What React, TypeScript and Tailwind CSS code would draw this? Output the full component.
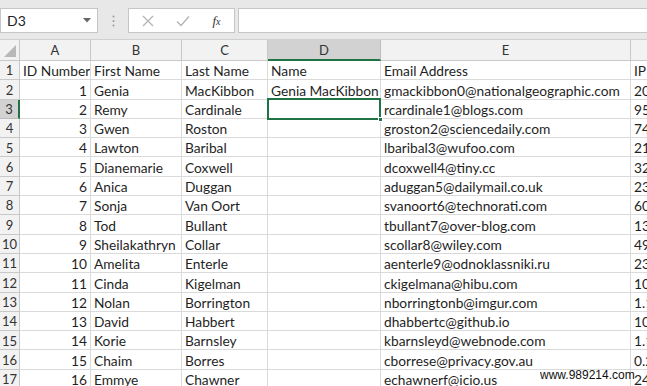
import React from "react";

const data: (string | number)[][] = [
  ["ID Number", "First Name", "Last Name", "Name", "Email Address", "IP Address"],
  [1, "Genia", "MacKibbon", "Genia MacKibbon", "gmackibbon0@nationalgeographic.com", "206.214.36.2"],
  [2, "Remy", "Cardinale", "", "rcardinale1@blogs.com", "95.104.11.3"],
  [3, "Gwen", "Roston", "", "groston2@sciencedaily.com", "74.52.88.19"],
  [4, "Lawton", "Baribal", "", "lbaribal3@wufoo.com", "217.66.1.40"],
  [5, "Dianemarie", "Coxwell", "", "dcoxwell4@tiny.cc", "32.195.7.8"],
  [6, "Anica", "Duggan", "", "aduggan5@dailymail.co.uk", "234.9.51.6"],
  [7, "Sonja", "Van Oort", "", "svanoort6@technorati.com", "60.120.4.77"],
  [8, "Tod", "Bullant", "", "tbullant7@over-blog.com", "138.8.22.1"],
  [9, "Sheilakathryn", "Collar", "", "scollar8@wiley.com", "49.33.170.5"],
  [10, "Amelita", "Enterle", "", "aenterle9@odnoklassniki.ru", "237.4.9.12"],
  [11, "Cinda", "Kigelman", "", "ckigelmana@hibu.com", "103.51.2.8"],
  [12, "Nolan", "Borrington", "", "nborringtonb@imgur.com", "1.178.32.4"],
  [13, "David", "Habbert", "", "dhabbertc@github.io", "109.7.20.3"],
  [14, "Korie", "Barnsley", "", "kbarnsleyd@webnode.com", "1.145.9.60"],
  [15, "Chaim", "Borres", "", "cborrese@privacy.gov.au", "0.219.5.4"],
  [16, "Emmye", "Chawner", "", "echawnerf@icio.us", "244.8.1.90"],
];

const cols = ["A", "B", "C", "D", "E", "F"];

export default function App() {
  return (
    <div
      className="w-[647px] h-[386px] overflow-hidden bg-white relative text-[#1f1f1f]"
      style={{ fontFamily: "Lato, 'Open Sans', sans-serif" }}
    >
      {/* formula bar */}
      <div className="h-[40px] bg-[#e8e8e8] flex items-start pt-[8px] border-b border-[#d0d0d0]">
        <div className="w-[98px] h-[25px] bg-white border border-[#c6c6c6] flex items-center justify-between pl-[6px] pr-[6px]">
          <span className="text-[14px] text-[#222]">D3</span>
          <svg width="8" height="5" viewBox="0 0 8 5">
            <path d="M0 0 L8 0 L4 4.5 Z" fill="#666" />
          </svg>
        </div>
        <div className="w-[30px] h-[25px] flex items-center justify-center">
          <svg width="3" height="12" viewBox="0 0 3 12">
            <circle cx="1.5" cy="1.5" r="1" fill="#9a9a9a" />
            <circle cx="1.5" cy="6" r="1" fill="#9a9a9a" />
            <circle cx="1.5" cy="10.5" r="1" fill="#9a9a9a" />
          </svg>
        </div>
        <div className="w-[107px] h-[25px] bg-white border border-[#c6c6c6] flex items-center">
          <div className="w-[38px] flex justify-center">
            <svg width="12" height="12" viewBox="0 0 12 12">
              <path d="M1 1 L11 11 M11 1 L1 11" stroke="#b4b4b4" strokeWidth="1.3" />
            </svg>
          </div>
          <div className="w-[32px] flex justify-center">
            <svg width="14" height="12" viewBox="0 0 14 12">
              <path d="M1 6.5 L5 10.5 L13 1.5" stroke="#b4b4b4" strokeWidth="1.4" fill="none" />
            </svg>
          </div>
          <div className="flex-1 flex justify-center">
            <span
              className="text-[13px] italic text-[#333]"
              style={{ fontFamily: "'Liberation Serif', serif" }}
            >
              f<span className="text-[10px]">x</span>
            </span>
          </div>
        </div>
        <div className="ml-[3px] flex-1 h-[25px] bg-white border border-[#c6c6c6] border-r-0" />
      </div>

      {/* grid */}
      <div
        className="grid"
        style={{
          gridTemplateColumns: "20px 71px 91px 86px 113px 250px 100px",
          gridTemplateRows: "21px repeat(17, 19.3px)",
        }}
      >
        {/* header row */}
        <div className="bg-[#f2f2f2] border-r border-b border-[#c8c8c8] relative">
          <svg className="absolute right-[3px] bottom-[3px]" width="12" height="12" viewBox="0 0 12 12">
            <path d="M12 0 L12 12 L0 12 Z" fill="#b8b8b8" />
          </svg>
        </div>
        {cols.map((c, i) => (
          <div
            key={c}
            className={
              i === 3
                ? "bg-[#d2d2d2] border-r border-[#bdbdbd] border-b-2 border-b-[#217346] flex items-center justify-center pt-[2px] text-[13px] text-[#333]"
                : "bg-[#f2f2f2] border-r border-b border-[#c8c8c8] flex items-center justify-center pt-[2px] text-[13px] text-[#333]"
            }
          >
            {c}
          </div>
        ))}

        {data.map((row, r) => {
          const rn = r + 1;
          const sel = rn === 3;
          return (
            <React.Fragment key={rn}>
              <div
                className={
                  sel
                    ? "bg-[#d2d2d2] border-r-2 border-r-[#217346] border-b border-[#bdbdbd] flex items-center justify-center pt-[2px] text-[13px] text-[#333]"
                    : "bg-[#f2f2f2] border-r border-b border-[#c8c8c8] flex items-center justify-center pt-[2px] text-[13px] text-[#333]"
                }
              >
                {rn}
              </div>
              {row.map((v, ci) => (
                <div
                  key={ci}
                  className={
                    "border-r border-b border-[#dadada] flex items-end pb-[1px] overflow-hidden whitespace-nowrap text-[13.75px] leading-[14px] " +
                    (typeof v === "number" ? "justify-end pr-[3px]" : "pl-[3px]")
                  }
                >
                  {v}
                </div>
              ))}
            </React.Fragment>
          );
        })}
      </div>

      {/* selected cell D3 */}
      <div className="absolute left-[267px] top-[98px] w-[114px] h-[22px] border-2 border-[#217346] pointer-events-none">
        <div className="absolute right-[-4px] bottom-[-4px] w-[5px] h-[5px] bg-[#217346] border border-white" />
      </div>

      {/* watermark */}
      <div
        className="absolute left-[540px] top-[369px] text-[12px] text-[#111] leading-none"
        style={{ fontFamily: "'Liberation Sans', Arial, sans-serif" }}
      >
        www.989214.com
      </div>
    </div>
  );
}
